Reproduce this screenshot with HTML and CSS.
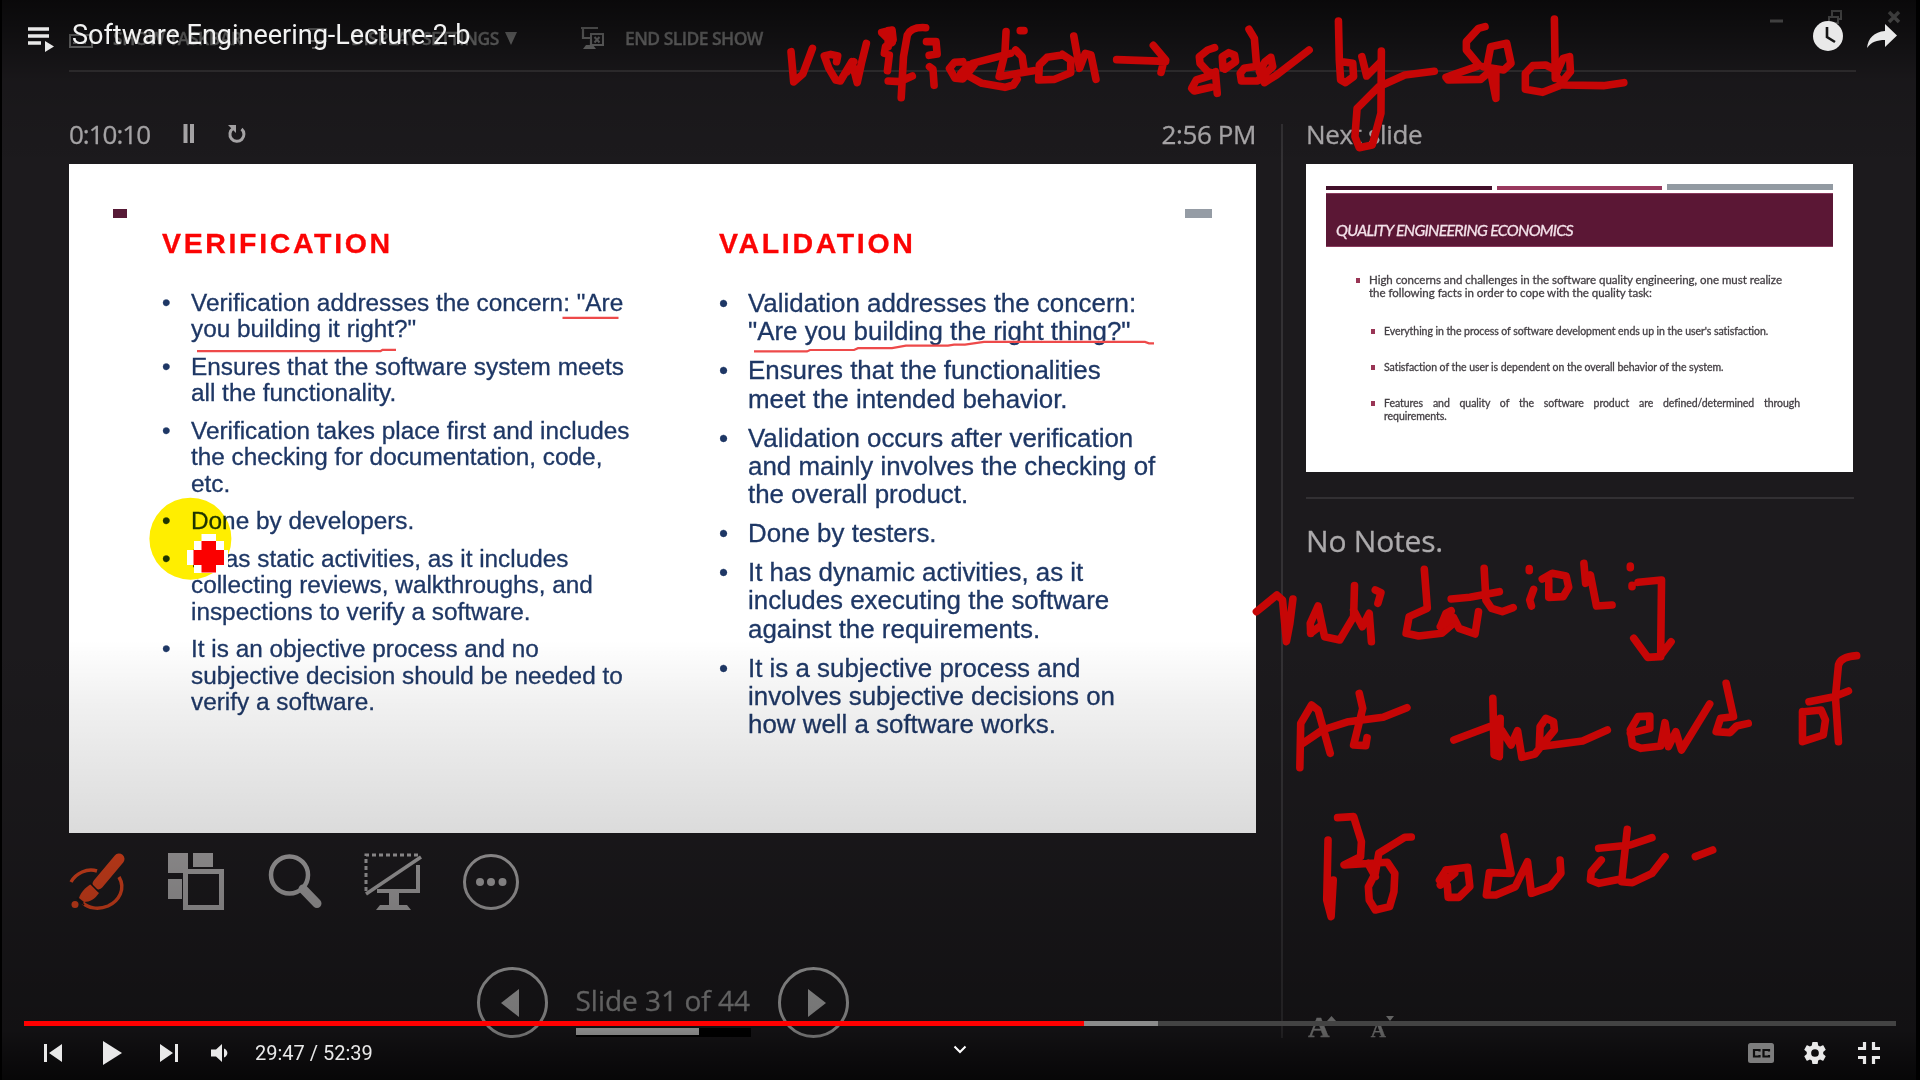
FILE: index.html
```html
<!DOCTYPE html>
<html lang="en">
<head>
<meta charset="utf-8">
<title>Software Engineering-Lecture-2-b</title>
<link rel="stylesheet" href="styles.css">
</head>
<body>
<div class="stage">
  <main class="presenter">
    <header class="topbar">
      <div class="top-item taskbar"><svg width="24" height="14" viewBox="0 0 24 14"><path d="M1 1h22v12H1zM4 9h3M9 9h3M14 9h3" fill="none" stroke="currentColor" stroke-width="2"/></svg><span>SHOW TASKBAR</span></div>
      <div class="top-item display"><svg width="24" height="24" viewBox="0 0 24 24"><path d="M2 3h17v12H2zM10 15v6M5 22h11" fill="none" stroke="currentColor" stroke-width="2"/></svg><span>DISPLAY SETTINGS</span><svg class="caret" width="12" height="13" viewBox="0 0 12 13"><path d="M0 0h12L6 13z" fill="currentColor"/></svg></div>
      <div class="top-item end"><svg width="24" height="24" viewBox="0 0 24 24"><path d="M0 2h17M2 2v10h7M10 14v6" fill="none" stroke="currentColor" stroke-width="2.2"/><path d="M2 23l3-4h7l3 4z" fill="currentColor"/><path d="M10 8h12v11H10z" fill="none" stroke="currentColor" stroke-width="2"/><path d="M13.500 11l5 5.500M18.500 11l-5 5.500" stroke="currentColor" stroke-width="2"/></svg><span>END SLIDE SHOW</span></div>
      <div class="window-buttons">
        <svg width="132" height="16" viewBox="0 0 132 16"><path d="M0 12h13" stroke="currentColor" stroke-width="3"/><path d="M59 8h9v6h-9zM62 8V2h9v8h-3" fill="none" stroke="currentColor" stroke-width="2"/><path d="M119 3l10 10M129 3l-10 10" stroke="currentColor" stroke-width="3.500"/></svg>
      </div>
    </header>
    <div class="columns">
      <section class="current">
        <div class="timer">
          <span class="elapsed">0:10:10</span>
          <svg class="pause" width="12" height="20" viewBox="0 0 12 20"><path d="M2.500 0v19M9 0v19" stroke="currentColor" stroke-width="4"/></svg>
          <svg class="restart" width="20" height="20" viewBox="0 0 20 20"><path d="M14.500 5a7 7 0 1 1-8.500-.500" fill="none" stroke="currentColor" stroke-width="3"/><path d="M1 1h8v8z" fill="currentColor"/></svg>
          <span class="clock">2:56 PM</span>
        </div>
        <article class="slide">
          <div class="marks"><i class="mark maroon"></i><i class="mark grey"></i></div>
          <div class="compare">
            <section class="verification">
              <h2>VERIFICATION</h2>
              <ul>
                <li><span>Verification addresses the concern: "Are<br>you building it right?"</span></li>
                <li><span>Ensures that the software system meets<br>all the functionality.</span></li>
                <li><span>Verification takes place first and includes<br>the checking for documentation, code,<br>etc.</span></li>
                <li><span>Done by developers.</span></li>
                <li><span>It has static activities, as it includes<br>collecting reviews, walkthroughs, and<br>inspections to verify a software.</span></li>
                <li><span>It is an objective process and no<br>subjective decision should be needed to<br>verify a software.</span></li>
              </ul>
            </section>
            <section class="validation">
              <h2>VALIDATION</h2>
              <ul>
                <li><span>Validation addresses the concern:<br>"Are you building the right thing?"</span></li>
                <li><span>Ensures that the functionalities<br>meet the intended behavior.</span></li>
                <li><span>Validation occurs after verification<br>and mainly involves the checking of<br>the overall product.</span></li>
                <li><span>Done by testers.</span></li>
                <li><span>It has dynamic activities, as it<br>includes executing the software<br>against the requirements.</span></li>
                <li><span>It is a subjective process and<br>involves subjective decisions on<br>how well a software works.</span></li>
              </ul>
            </section>
          </div>
        </article>
        <div class="tools">
          <svg viewBox="0 0 58 58" class="pen"><path d="M2 29C7 20 18 15 28 18M50 24C57 36 50 48 39 53C29 57 19 55 14 50" fill="none" stroke="currentColor" stroke-width="3.500"/><path d="M50 6L29 31" stroke="currentColor" stroke-width="11" stroke-linecap="round"/><path d="M22 31l8 9c-4 6-9 9-15 9l-5-4c2-6 6-10 12-14z" fill="currentColor"/><path d="M21 30l9 9M8 45l7 7" stroke="#171517" stroke-width="1.500"/><circle cx="6" cy="51.500" r="3.500" fill="currentColor"/></svg>
          <svg viewBox="0 0 58 58"><path d="M1 0h20v20H1zM26 0h20v14H26zM1 26h14v20H1z" fill="currentColor"/><path d="M18.500 18.500h36v36h-36z" fill="none" stroke="currentColor" stroke-width="5"/></svg>
          <svg viewBox="0 0 58 58"><circle cx="23.500" cy="22" r="18.500" fill="none" stroke="currentColor" stroke-width="4.500"/><path d="M37 36l14 14.500" stroke="currentColor" stroke-width="9" stroke-linecap="round"/></svg>
          <svg viewBox="0 0 58 58"><path d="M2 38V2h52" fill="none" stroke="currentColor" stroke-width="3" stroke-dasharray="4 3"/><path d="M2 41L57 4" stroke="currentColor" stroke-width="3.500"/><path d="M54 12v26H13" fill="none" stroke="currentColor" stroke-width="4"/><path d="M25 38h10v14h8l4 5H12l4-5h9z" fill="currentColor"/></svg>
          <svg viewBox="0 0 58 58"><circle cx="29" cy="29" r="26.500" fill="none" stroke="currentColor" stroke-width="3"/><g fill="currentColor"><circle cx="18" cy="29" r="4"/><circle cx="29" cy="29" r="4"/><circle cx="40.500" cy="29" r="4"/></g></svg>
        </div>
        <nav class="slide-nav">
          <svg viewBox="0 0 71 71"><circle cx="35.500" cy="35.500" r="34" fill="none" stroke="currentColor" stroke-width="3"/><path d="M24 36L42 22v28z" fill="currentColor"/></svg>
          <div class="counter"><p>Slide 31 of 44</p><div class="track"><div class="done" style="width:70.5%"></div></div></div>
          <svg viewBox="0 0 71 71"><circle cx="35.500" cy="35.500" r="34" fill="none" stroke="currentColor" stroke-width="3"/><path d="M48 36L30 22v28z" fill="currentColor"/></svg>
        </nav>
      </section>
      <aside class="side">
        <p class="next-label">Next slide</p>
        <article class="preview">
          <div class="stripes"><i></i><i></i><i></i></div>
          <h3><span>QUALITY ENGINEERING ECONOMICS</span></h3>
          <p class="lead">High concerns and challenges in the software quality engineering, one must realize<br>the following facts in order to cope with the quality task:</p>
          <ul>
            <li>Everything in the process of software development ends up in the user's satisfaction.</li>
            <li>Satisfaction of the user is dependent on the overall behavior of the system.</li>
            <li><span class="spread">Features and quality of the software product are defined/determined through</span> requirements.</li>
          </ul>
        </article>
        <p class="notes">No Notes.</p>
        <div class="text-size">
          <b class="bigger">A</b><svg width="9" height="5"><path d="M0 5L4.500 0L9 5z" fill="currentColor"/></svg>
          <b class="smaller">A</b><svg width="8" height="5"><path d="M0 0L4 5L8 0z" fill="currentColor"/></svg>
        </div>
      </aside>
    </div>
  </main>

  <svg class="pointer" viewBox="0 0 1290 1080" width="1290" height="1080">
    <circle cx="190.400" cy="538.700" r="41" fill="#ffee00" class="halo"/>
    <path d="M201.500 534h14.500v7h8v9h4v21h-12v2h-22v-8h-7v-15h7v-9h7.500z" fill="#fff"/>
    <path d="M193.500 550h8v-9H216v9h8v15h-8v7.500h-14.500V565h-8z" fill="#fb0000"/>
    <g fill="none" stroke="#ee4a4a" stroke-width="2.200">
      <path d="M562.500 317.800h56M197 351.200h183.500l2-1.400H396"/>
      <path d="M754 351.400h53l3-1.400h44l4-1.800h34l14-2.500h42l6-1h11l19-2.800h161l4 1.400h5"/>
    </g>
  </svg>

  <div class="shade"></div>

  <div class="player">
    <div class="player-top">
      <svg class="queue" width="26" height="25" viewBox="0 0 26 25"><path d="M0 2h21M0 9h21M0 16h13" stroke="currentColor" stroke-width="3.600"/><path d="M17 14l9 5.500-9 5.500z" fill="currentColor"/></svg>
      <h1>Software Engineering-Lecture-2-b</h1>
      <svg class="later" width="30" height="30" viewBox="0 0 30 30"><circle cx="15" cy="15" r="15" fill="currentColor"/><path d="M14 6v10l8 5" fill="none" stroke="#161616" stroke-width="2.600"/></svg>
      <svg class="share" width="30" height="24" viewBox="0 0 30 24"><path d="M18 0l12 11.500L18 23v-7C10 16 4 18 0 24 1 14 7 8 18 7z" fill="currentColor"/></svg>
    </div>
    <div class="player-bottom">
      <div class="progress"><div class="loaded" style="width:60.6%"></div><div class="played" style="width:56.6%"></div></div>
      <div class="controls">
        <svg class="prev" width="18" height="18" viewBox="0 0 18 18"><path d="M0 0h3v18H0zM18 0v18L5 9z" fill="currentColor"/></svg>
        <svg class="play" width="19" height="24" viewBox="0 0 19 24"><path d="M0 0l19 12L0 24z" fill="currentColor"/></svg>
        <svg class="next" width="18" height="18" viewBox="0 0 18 18"><path d="M15 0h3v18h-3zM0 0v18l13-9z" fill="currentColor"/></svg>
        <svg class="volume" width="17" height="18" viewBox="0 0 17 18"><path d="M0 5.500h5L11 0v18l-6-5.500H0zM13 4.500c4.500 1.800 4.500 7.200 0 9z" fill="currentColor"/></svg>
        <span class="time">29:47 / 52:39</span>
        <svg class="chevron" width="14" height="9" viewBox="0 0 14 9"><path d="M1.500 1.500L7 7l5.500-5.500" fill="none" stroke="currentColor" stroke-width="2"/></svg>
        <svg class="cc" width="26" height="20" viewBox="0 0 26 20"><rect width="26" height="20" rx="2.500" fill="#7d7d7d"/><path d="M11.500 8.500V7H6v6.500h5.500V12M21 8.500V7h-5.500v6.500H21V12" fill="none" stroke="#0e0e0e" stroke-width="2.200"/></svg>
        <svg class="gear" width="22" height="22" viewBox="2 2 20 20"><path fill="currentColor" d="M19.430 12.980c.040-.320.070-.640.070-.980s-.030-.660-.070-.980l2.110-1.650c.190-.150.240-.420.120-.640l-2-3.460c-.120-.220-.390-.300-.610-.220l-2.490 1c-.520-.400-1.080-.730-1.690-.980l-.380-2.650A.488.488 0 0 0 14 2h-4c-.250 0-.460.180-.490.420l-.380 2.650c-.610.250-1.170.590-1.690.980l-2.490-1c-.230-.090-.490 0-.610.220l-2 3.460c-.130.220-.070.490.120.640l2.110 1.650c-.040.320-.070.650-.070.980s.030.660.070.980l-2.110 1.650c-.190.150-.240.420-.120.640l2 3.460c.120.220.390.300.610.220l2.490-1c.520.400 1.080.730 1.690.980l.380 2.650c.030.240.240.420.490.420h4c.250 0 .460-.180.490-.420l.380-2.650c.610-.250 1.170-.590 1.690-.980l2.490 1c.230.090.490 0 .610-.220l2-3.460c.120-.220.070-.490-.120-.640zM12 15.500A3.500 3.500 0 1 1 12 8.500a3.500 3.500 0 0 1 0 7z"/></svg>
        <svg class="shrink" width="22" height="22" viewBox="0 0 22 22"><path d="M0 6.500h6.500V0M15.500 0v6.500H22M0 15.500h6.500V22M15.500 22v-6.500H22" fill="none" stroke="currentColor" stroke-width="3.200"/></svg>
      </div>
    </div>
  </div>

  <svg class="ink" width="1920" height="1080" viewBox="0 0 1920 1080">
    <g transform="translate(760 0) scale(.38265 .33333)">
      <path d="M81 155L88 246L112 222L137 145"/>
      <path d="M200 185L203 168L185 163L168 168L180 205L198 240L210 243L240 185L254 248L265 190L278 130M228 215L245 185"/>
      <path d="M318 97L345 90L348 120L328 140L325 160M320 100L345 128M335 92V140M338 165L333 212"/>
      <path d="M433 83Q395 80 385 105L375 170L369 293M335 243L365 245L398 228"/>
      <path d="M435 125L460 125L463 162L442 166M443 200L452 208L455 256"/>
      <path d="M530 185L508 187L495 205L510 235L530 237L545 215L555 190L655 160M545 195L525 220M560 195L540 225L580 250L640 262L662 255L672 238"/>
      <path d="M643 95L640 160L625 230L715 212M668 150L685 170L690 208M680 92H690"/>
      <path d="M790 165L750 172L730 195L728 240L770 238L812 218L812 180L790 163M820 108L835 205L850 160L865 165L878 238"/>
      <path d="M932 179L1060 184M1028 136L1060 180M1056 180L1048 217"/>
      <path d="M1188 143L1170 150L1148 170L1150 190L1170 215L1190 222L1140 240L1128 265L1135 273L1178 262M1190 215L1195 280"/>
      <path d="M1210 205L1208 170L1225 158L1240 165L1243 185L1215 207"/>
      <path d="M1278 88L1292 115L1298 200M1290 200L1265 205L1255 220L1258 243L1300 243L1340 200L1335 172L1320 185L1305 215L1318 248L1350 225L1435 150"/>
    </g>
    <g transform="translate(1240 0) scale(.43367 .33333)">
      <path d="M227 63L229 180L232 240L243 248L262 230L260 190L235 185M281 170L292 228L325 185"/>
      <path d="M326 153L325 340L305 435L275 443L265 410L270 325L320 260L380 225L448 214"/>
      <path d="M565 80L550 85L522 125V150L552 197L500 220L475 232L480 240L555 238L580 210M570 195L578 140L615 130L625 190L608 210L560 200M578 215L590 295M590 215V290"/>
      <path d="M725 57L727 235M720 205L705 195L675 197L658 220V268L698 277L735 258L762 215L760 170L745 175L728 225L745 255L838 257L885 248"/>
    </g>
    <g transform="translate(1240 500) scale(.43367 .33333)">
      <path d="M38 335L85 285L98 300L107 425L115 370L122 297"/>
      <path d="M163 400L162 370L180 318L195 410L230 420L262 350L264 257M163 400L185 378M262 330L282 380L298 340L303 425M312 270L325 278L318 310"/>
      <path d="M425 208L432 325L390 350L383 400L412 408L465 400L490 372"/>
      <path d="M462 380L475 340L487 332M462 380L492 352L505 385L542 402L550 335"/>
      <path d="M563 205L567 300L580 325L605 335L630 323M487 297L530 292L598 275M667 206V212M677 268L668 300L672 318"/>
      <path d="M712 240V292L745 290L758 262L752 228L720 220L697 237M793 190L797 250L808 225L822 318L858 315"/>
      <path d="M900 198V203M904 256V260M918 247L972 240L970 470M908 415L940 472L968 470L994 425"/>
      <path d="M138 803L140 670L165 615L180 630L208 760M145 730L190 690L250 665L330 652L385 623M275 580L283 625L262 735L290 737L293 713"/>
      <path d="M493 720L585 675M583 595L586 765L598 770L600 655M603 690L625 735L640 692L650 772L680 762L725 690L723 665L705 655L692 680L690 740L790 723L847 690"/>
      <path d="M900 700L945 685V648L918 650L900 690L905 735L925 745L970 738L980 668L988 740L1005 695L1018 750L1083 612"/>
      <path d="M1121 550L1138 650L1108 655L1098 695L1130 698L1145 678L1172 670"/>
      <path d="M1297 635V725L1345 705L1350 660L1340 630L1300 635M1422 467Q1385 470 1380 495L1373 590L1380 725M1312 605L1370 590L1403 573"/>
      <path d="M203 1020L200 1200L210 1250L215 1140M225 953L262 950L280 1025L278 1070L240 1095L340 1087L357 1120L355 1175L345 1220L312 1230L298 1200L296 1160L312 1120L320 1060L380 1012L395 1011M295 1090L312 1130"/>
      <path d="M475 1110L525 1102L530 1160L505 1192L480 1192L478 1155L460 1140L475 1110M462 1155L495 1120"/>
      <path d="M609 1010L625 1120L575 1118L568 1185L590 1185L635 1160L663 1085L672 1180L715 1160L740 1120L738 1080"/>
      <path d="M833 1080L810 1115L808 1140L828 1150L875 1138M893 988L880 1145L905 1148L950 1120L980 1070M827 1045L900 1035L950 1013M1050 1070L1090 1050"/>
    </g>
  </svg>
</div>
</body>
</html>
```
FILE: styles.css
```css
* { box-sizing: border-box; margin: 0; padding: 0; }
body { background: #000; overflow: hidden; }
svg { display: block; flex: none; }
ul { list-style: none; }

.stage {
  position: relative;
  width: 1920px;
  height: 1080px;
  background: #000;
  overflow: hidden;
}

/* Presenter view */
.presenter {
  width: 1914px;
  height: 1080px;
  margin-left: 2px;
  padding: 0 60px 0 67px;
  background: #1c1a1d;
  color: #acaaac;
  font-family: "Open Sans", "Noto Sans", sans-serif;
  -webkit-text-stroke: .3px currentColor;
}
.topbar {
  display: flex;
  align-items: center;
  height: 72px;
  padding-top: 6px;
  border-bottom: 2px solid #343234;
  color: #858585;
  font-size: 17.5px;
  font-weight: 600;
  white-space: nowrap;
}
.top-item { display: flex; align-items: center; gap: 20px; height: 24px; letter-spacing: -.45px; }
.taskbar { width: 238px; }
.taskbar svg { margin-top: 6px; }
.display { width: 274px; }
.display .caret { margin-left: -14px; }
.end { letter-spacing: -.55px; }
.window-buttons { margin: -42px -46px 0 auto; }

.columns { display: grid; grid-template-columns: 1212px 1fr; }
.timer {
  display: flex;
  align-items: center;
  height: 92px;
  padding-top: 32px;
  font-size: 26px;
  line-height: 36px;
}
.elapsed { width: 114px; letter-spacing: -1px; }
.restart { margin-left: 32px; }
.clock { margin-left: auto; margin-right: 25px; letter-spacing: -.4px; }

.slide {
  width: 1187px;
  height: 669px;
  padding-top: 45px;
  background: #fff;
  color: #1e3765;
  font-family: "Liberation Sans", Arial, sans-serif;
  white-space: nowrap;
}
.marks { display: flex; justify-content: space-between; padding: 0 44px; }
.mark { height: 9px; }
.maroon { width: 14px; background: #571a36; }
.grey { width: 27px; background: #959ca5; }
.compare {
  display: grid;
  grid-template-columns: 557px 1fr;
  padding: 8px 0 0 93px;
}
.slide h2 {
  margin-bottom: 29px;
  color: #fb0404;
  font-size: 28.500px;
  line-height: 34px;
  letter-spacing: 2.650px;
}
.slide li { display: grid; grid-template-columns: 29px 1fr; }
.slide li::before { content: "•"; }
.verification ul { margin-top: 30px; font-size: 24.350px; line-height: 26.400px; }
.verification li { margin-bottom: 11.200px; }
.validation ul { font-size: 25.900px; line-height: 28.200px; }
.validation li { margin-bottom: 10.900px; }

.tools { display: flex; gap: 40.300px; margin-top: 20px; color: #a09e9f; }
.tools svg { width: 58px; height: 58px; }
.tools .pen { color: #d2401c; }
.slide-nav {
  display: flex;
  gap: 27.500px;
  margin: 56px 0 0 408px;
  color: #b0b0b0;
}
.slide-nav svg { width: 71px; height: 71px; }
.counter { width: 175px; padding-top: 15px; color: #8f8f8f; }
.counter p { font-size: 28px; line-height: 36px; letter-spacing: 0; white-space: nowrap; }
.track { height: 9px; margin-top: 10px; padding-bottom: 2px; background: #000; }
.done { height: 100%; background: #cfcfcf; }

.side {
  display: flex;
  flex-direction: column;
  width: 575px;
  height: 914px;
  margin-top: 52px;
  padding-left: 23px;
  border-left: 2px solid #333134;
}
.next-label { font-size: 26px; line-height: 20px; letter-spacing: -.35px; }
.preview {
  width: 547px;
  height: 308px;
  margin-top: 20px;
  padding: 20px 20px 0;
  background: #fff;
  color: #454045;
  font-family: Lato, sans-serif;
}
.stripes { display: grid; grid-template-columns: repeat(3, 1fr); gap: 5px; align-items: end; height: 6px; }
.stripes i { height: 4px; background: #42102a; }
.stripes i:nth-child(2) { background: #98385d; }
.stripes i:nth-child(3) { height: 6px; background: #929aa2; }
.preview h3 {
  display: flex;
  align-items: end;
  height: 54px;
  margin-top: 3px;
  padding: 0 0 6px 10px;
  border: 1px solid #8a3a5c;
  border-width: 1px 0;
  background: #5b1735;
  color: #f3e1e9;
  font-size: 16px;
  font-style: italic;
  font-weight: 400;
  line-height: 20px;
  letter-spacing: -.75px;
  white-space: nowrap;
}
.lead, .preview li { position: relative; white-space: nowrap; }
.lead { margin: 27px 0 0 43px; font-size: 11.500px; line-height: 12.600px; letter-spacing: -.020px; }
.preview ul { margin: 26px 33px 0 58px; font-size: 10.500px; line-height: 12.600px; letter-spacing: -.050px; }
.preview li { margin-bottom: 23.500px; }
.preview .spread { display: block; text-align-last: justify; }
.lead::before, .preview li::before {
  content: "";
  position: absolute;
  left: -13px;
  top: 4px;
  width: 4px;
  height: 5px;
  background: #993555;
}
.notes {
  width: 548px;
  margin-top: 25px;
  padding-top: 22px;
  border-top: 2px solid #323033;
  font-size: 30px;
  line-height: 40px;
  letter-spacing: -.2px;
}
.text-size {
  display: flex;
  align-items: flex-start;
  height: 22px;
  margin: auto 0 0 2px;
  color: #949494;
  font-family: "Liberation Serif", serif;
}
.text-size b { line-height: 22px; }
.bigger { font-size: 30px; }
.smaller { margin: 3px 0 0 35px; font-size: 21px; }
.text-size .bigger + svg { margin-left: -3px; }

/* Layers over the slide */
.pointer, .shade, .player, .ink { position: absolute; left: 0; top: 0; }
.pointer, .halo { mix-blend-mode: multiply; }
.pointer { mix-blend-mode: normal; }
.shade {
  width: 1920px;
  height: 1080px;
  background:
    linear-gradient(#000000a6 0, #00000066 40px, #0000001f 80px, #00000000 170px),
    linear-gradient(#00000000 640px, #0000000f 705px, #00000024 832px, #0000004d 980px, #00000059 1030px, #000000c0 1080px);
}
.ink { fill: none; stroke: #c60606; stroke-width: 7.600px; stroke-linecap: round; stroke-linejoin: round; }
.ink path { vector-effect: non-scaling-stroke; }

/* Player chrome */
.player {
  display: flex;
  flex-direction: column;
  justify-content: space-between;
  width: 1920px;
  height: 1080px;
  color: #e9e9e9;
  font-family: Roboto, sans-serif;
}
.player-top { display: flex; align-items: center; height: 72px; padding: 0 23px 0 28px; }
.queue { margin-top: 6px; }
.player-top h1 { margin: -3px auto 0 18px; font-size: 27px; font-weight: 400; color: #f2f2f2; white-space: nowrap; }
.share { margin-left: 24px; }
.player-bottom { height: 59px; padding: 0 24px; }
.progress { display: grid; height: 5px; background: #434343; }
.progress div { grid-area: 1 / 1; }
.loaded { background: #8b8b8b; }
.played { background: #f00; }
.controls { display: flex; align-items: center; height: 54px; padding: 0 16px 0 20px; }
.play { margin: 0 38px 0 41px; }
.volume { margin-left: 33px; }
.time { width: 698px; margin-left: 27px; font-size: 20px; line-height: 24px; white-space: nowrap; }
.chevron { margin-top: -8px; color: #fff; }
.cc { margin-left: auto; }
.gear { margin: 0 32px 0 30px; }
```
